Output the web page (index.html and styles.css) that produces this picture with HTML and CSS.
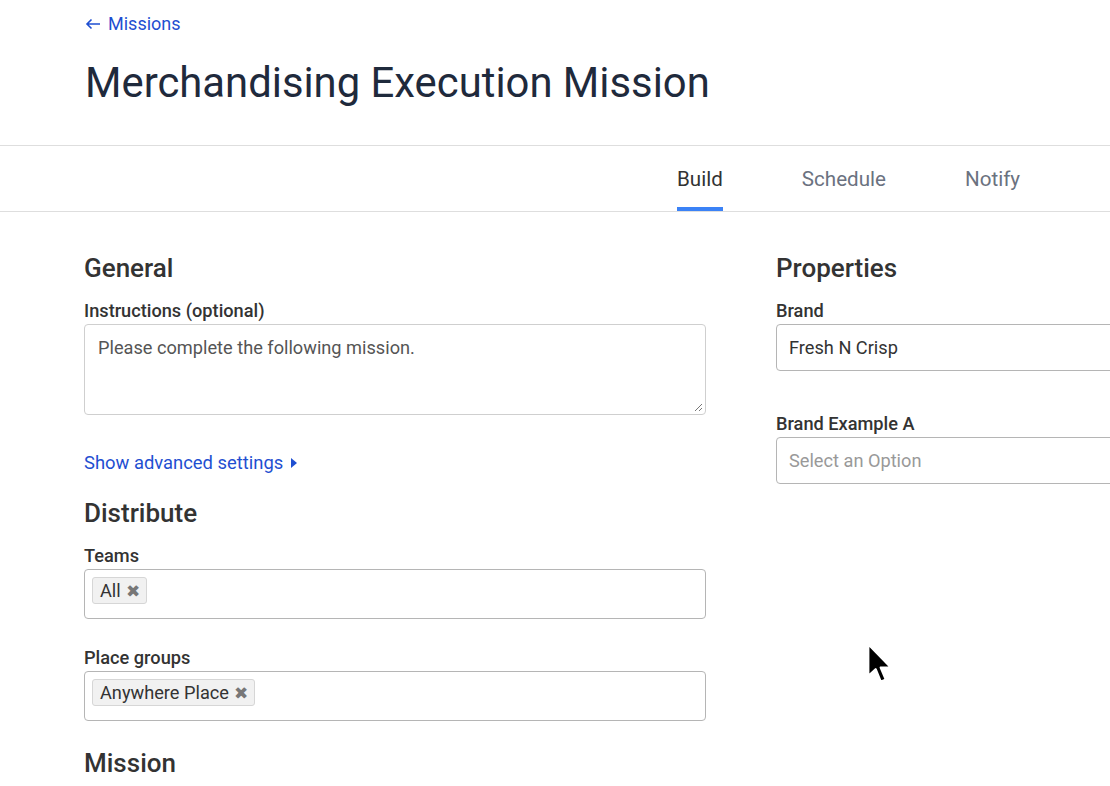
FILE: index.html
```html
<!DOCTYPE html>
<html>
<head>
<meta charset="utf-8">
<link rel="stylesheet" href="styles.css">
</head>
<body>
<header class="page-head">
  <a class="back" href="#"><svg class="arrow" width="16" height="12" viewBox="0 0 16 12"><path d="M15 6 H2 M6.5 1.5 L2 6 L6.5 10.5" fill="none" stroke="#1f4fd1" stroke-width="1.6"/></svg>Missions</a>
  <h1 class="title">Merchandising Execution Mission</h1>
</header>
<nav class="tabs">
  <a class="tab active" href="#">Build</a>
  <a class="tab" href="#">Schedule</a>
  <a class="tab" href="#">Notify</a>
</nav>
<main class="content">
  <section class="col-left">
    <h2 class="sec">General</h2>
    <label class="lbl">Instructions (optional)</label>
    <div class="textarea">Please complete the following mission.
      <svg class="grip" width="10" height="10" viewBox="0 0 10 10"><path d="M9 2 L2 9 M9 6 L6 9" stroke="#777" stroke-width="1"/></svg>
    </div>
    <a class="adv" href="#">Show advanced settings <span class="caret"></span></a>
    <h2 class="sec sec2">Distribute</h2>
    <label class="lbl">Teams</label>
    <div class="multi"><span class="chip">All <span class="x">✖</span></span></div>
    <label class="lbl lbl2">Place groups</label>
    <div class="multi"><span class="chip">Anywhere Place <span class="x">✖</span></span></div>
    <h2 class="sec sec3">Mission</h2>
  </section>
  <section class="col-right">
    <h2 class="sec">Properties</h2>
    <label class="lbl">Brand</label>
    <div class="input">Fresh N Crisp</div>
    <label class="lbl lbl3">Brand Example A</label>
    <div class="input placeholder">Select an Option</div>
  </section>
</main>
<svg class="cursor" width="34" height="50" viewBox="0 0 30 44">
  <path d="M2 2 L2 30 L8.5 24 L13 35 L17.5 33 L13 22.5 L22 22.5 Z" fill="#000" stroke="#fff" stroke-width="2" stroke-linejoin="round"/>
</svg>
</body>
</html>
```
FILE: styles.css
```css
* { box-sizing: border-box; }
body {
  margin: 0;
  background: #fff;
  font-family: Roboto, "Liberation Sans", sans-serif;
  color: #333;
  overflow: hidden;
  width: 1110px;
  height: 786px;
  position: relative;
}
a { text-decoration: none; }
.page-head {
  padding: 12px 0 0 85px;
  height: 146px;
  border-bottom: 1px solid #dedede;
}
.back {
  display: flex;
  align-items: center;
  gap: 7px;
  color: #1f4fd1;
  font-size: 18px;
  line-height: 24px;
}
.title {
  margin: 23px 0 0 0;
  font-size: 41.8px;
  font-weight: 400;
  color: #1f2a3c;
  line-height: 48px;
}
.tabs {
  height: 66px;
  border-bottom: 1px solid #dedede;
  display: flex;
  padding-left: 677px;
}
.tab {
  font-size: 20.6px;
  color: #6b7280;
  line-height: 24px;
  padding-top: 21px;
  height: 65px;
  margin-right: 79px;
}
.tab.active {
  color: #333;
  border-bottom: 4px solid #3b82f6;
}
.content {
  display: flex;
  padding: 40px 0 0 84px;
  gap: 70px;
}
.col-left { width: 622px; flex-shrink: 0; display: flex; flex-direction: column; }
.col-right { width: 400px; flex-shrink: 0; display: flex; flex-direction: column; }
.sec {
  margin: 0;
  font-size: 26px;
  font-weight: 500;
  line-height: 32px;
  color: #333;
}
.sec2 { margin-top: 23px; }
.sec3 { margin-top: 26px; }
.lbl {
  display: block;
  margin-top: 16px;
  font-size: 18.2px;
  font-weight: 500;
  line-height: 22px;
  color: #333;
}
.lbl2 { margin-top: 28px; }
.lbl3 { margin-top: 42px; }
.textarea {
  position: relative;
  margin-top: 2px;
  height: 91px;
  border: 1px solid #cfcfcf;
  border-radius: 4px;
  padding: 12px 13px;
  font-size: 18.2px;
  color: #555;
  line-height: 22px;
}
.grip { position: absolute; right: 2px; bottom: 2px; }
.adv {
  margin-top: 37px;
  font-size: 18.4px;
  color: #1f4fd1;
  line-height: 22px;
  display: flex;
  align-items: center;
  gap: 8px;
}
.caret {
  width: 0; height: 0;
  border-top: 5px solid transparent;
  border-bottom: 5px solid transparent;
  border-left: 6px solid #1f4fd1;
}
.multi {
  margin-top: 2px;
  height: 50px;
  border: 1px solid #b5b5b5;
  border-radius: 4px;
  padding: 7px;
  display: flex;
  align-items: flex-start;
}
.chip {
  display: inline-flex;
  align-items: center;
  gap: 5px;
  height: 27px;
  padding: 0 6px 0 7px;
  background: #f1f1f1;
  border: 1px solid #d6d6d6;
  border-radius: 3px;
  font-size: 18.2px;
  color: #333;
}
.x { font-size: 17px; color: #777; }
.input {
  margin-top: 2px;
  height: 47px;
  border: 1px solid #b5b5b5;
  border-radius: 4px;
  padding: 0 12px;
  display: flex;
  align-items: center;
  font-size: 18.2px;
  color: #333;
}
.placeholder { color: #999; }
.cursor {
  position: absolute;
  left: 866px;
  top: 642px;
}
```
